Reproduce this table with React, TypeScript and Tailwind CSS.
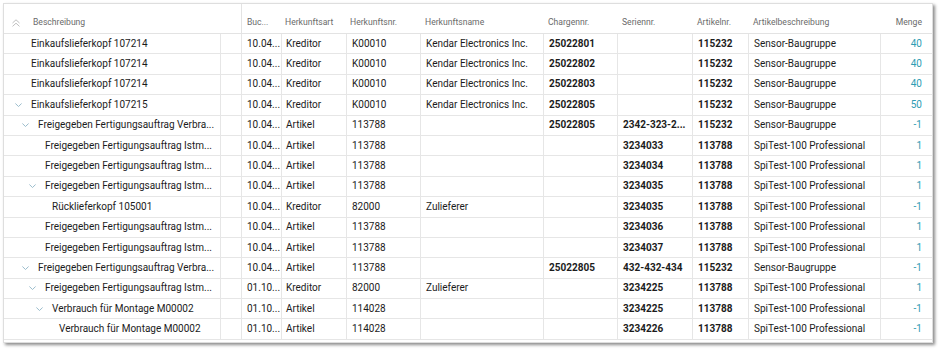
const rows = [
  { lvl: 0, open: false, desc: "Einkaufslieferkopf 107214", date: "10.04...", art: "Kreditor", nr: "K00010", name: "Kendar Electronics Inc.", charge: "25022801", serie: "", item: "115232", itemDesc: "Sensor-Baugruppe", qty: "40" },
  { lvl: 0, open: false, desc: "Einkaufslieferkopf 107214", date: "10.04...", art: "Kreditor", nr: "K00010", name: "Kendar Electronics Inc.", charge: "25022802", serie: "", item: "115232", itemDesc: "Sensor-Baugruppe", qty: "40" },
  { lvl: 0, open: false, desc: "Einkaufslieferkopf 107214", date: "10.04...", art: "Kreditor", nr: "K00010", name: "Kendar Electronics Inc.", charge: "25022803", serie: "", item: "115232", itemDesc: "Sensor-Baugruppe", qty: "40" },
  { lvl: 0, open: true, desc: "Einkaufslieferkopf 107215", date: "10.04...", art: "Kreditor", nr: "K00010", name: "Kendar Electronics Inc.", charge: "25022805", serie: "", item: "115232", itemDesc: "Sensor-Baugruppe", qty: "50" },
  { lvl: 1, open: true, desc: "Freigegeben Fertigungsauftrag Verbra...", date: "10.04...", art: "Artikel", nr: "113788", name: "", charge: "25022805", serie: "2342-323-2...", item: "115232", itemDesc: "Sensor-Baugruppe", qty: "-1" },
  { lvl: 2, open: false, desc: "Freigegeben Fertigungsauftrag Istm...", date: "10.04...", art: "Artikel", nr: "113788", name: "", charge: "", serie: "3234033", item: "113788", itemDesc: "SpiTest-100 Professional", qty: "1" },
  { lvl: 2, open: false, desc: "Freigegeben Fertigungsauftrag Istm...", date: "10.04...", art: "Artikel", nr: "113788", name: "", charge: "", serie: "3234034", item: "113788", itemDesc: "SpiTest-100 Professional", qty: "1" },
  { lvl: 2, open: true, desc: "Freigegeben Fertigungsauftrag Istm...", date: "10.04...", art: "Artikel", nr: "113788", name: "", charge: "", serie: "3234035", item: "113788", itemDesc: "SpiTest-100 Professional", qty: "1" },
  { lvl: 3, open: false, desc: "Rücklieferkopf 105001", date: "10.04...", art: "Kreditor", nr: "82000", name: "Zulieferer", charge: "", serie: "3234035", item: "113788", itemDesc: "SpiTest-100 Professional", qty: "-1" },
  { lvl: 2, open: false, desc: "Freigegeben Fertigungsauftrag Istm...", date: "10.04...", art: "Artikel", nr: "113788", name: "", charge: "", serie: "3234036", item: "113788", itemDesc: "SpiTest-100 Professional", qty: "1" },
  { lvl: 2, open: false, desc: "Freigegeben Fertigungsauftrag Istm...", date: "10.04...", art: "Artikel", nr: "113788", name: "", charge: "", serie: "3234037", item: "113788", itemDesc: "SpiTest-100 Professional", qty: "1" },
  { lvl: 1, open: true, desc: "Freigegeben Fertigungsauftrag Verbra...", date: "10.04...", art: "Artikel", nr: "113788", name: "", charge: "25022805", serie: "432-432-434", item: "115232", itemDesc: "Sensor-Baugruppe", qty: "-1" },
  { lvl: 2, open: true, desc: "Freigegeben Fertigungsauftrag Istm...", date: "01.10...", art: "Kreditor", nr: "82000", name: "Zulieferer", charge: "", serie: "3234225", item: "113788", itemDesc: "SpiTest-100 Professional", qty: "1" },
  { lvl: 3, open: true, desc: "Verbrauch für Montage M00002", date: "01.10...", art: "Artikel", nr: "114028", name: "", charge: "", serie: "3234225", item: "113788", itemDesc: "SpiTest-100 Professional", qty: "-1" },
  { lvl: 4, open: false, desc: "Verbrauch für Montage M00002", date: "01.10...", art: "Artikel", nr: "114028", name: "", charge: "", serie: "3234226", item: "113788", itemDesc: "SpiTest-100 Professional", qty: "-1" },
];

const cols = "grid grid-cols-[216px_21px_40px_65px_74px_123px_74px_75px_56px_132px_1fr]";

function Chevron() {
  return (
    <svg width="7" height="4" viewBox="0 0 7 4" className="shrink-0">
      <polyline points="0.4,0.5 3.5,3.5 6.6,0.5" fill="none" stroke="#8fb4c6" strokeWidth="0.9" />
    </svg>
  );
}

function CollapseAll() {
  return (
    <svg width="8" height="8" viewBox="0 0 8 8" className="shrink-0">
      <polyline points="0.5,4 4,0.8 7.5,4" fill="none" stroke="#b8b8b8" strokeWidth="0.9" />
      <polyline points="0.5,7.4 4,4.2 7.5,7.4" fill="none" stroke="#b8b8b8" strokeWidth="0.9" />
    </svg>
  );
}

const indents = ["pl-[11px]", "pl-[18px]", "pl-[25px]", "pl-[32px]", "pl-[39px]"];

export default function App() {
  return (
    <div className="w-[940px] h-[349px] bg-white pt-[3px] pl-[3px] font-['Roboto',sans-serif]">
      <div className="w-[930px] h-[340px] border border-[#dedede] bg-white shadow-[2px_2px_3px_rgba(0,0,0,0.45)] overflow-hidden">
        {/* header */}
        <div className={`${cols} h-[30px] border-b border-[#e3e3e3] text-[8.6px] text-[#6a6a6a]`}>
          <div className="col-span-2 flex items-center pt-[8px] pl-[8px] gap-[13px]">
            <CollapseAll />
            <span>Beschreibung</span>
          </div>
          <div className="flex items-center pt-[8px] pl-[5px] border-l border-[#e3e3e3]">Buc...</div>
          <div className="flex items-center pt-[8px] pl-[4px]">Herkunftsart</div>
          <div className="flex items-center pt-[8px] pl-[4px]">Herkunftsnr.</div>
          <div className="flex items-center pt-[8px] pl-[5px]">Herkunftsname</div>
          <div className="flex items-center pt-[8px] pl-[5px]">Chargennr.</div>
          <div className="flex items-center pt-[8px] pl-[5px]">Seriennr.</div>
          <div className="flex items-center pt-[8px] pl-[5px]">Artikelnr.</div>
          <div className="flex items-center pt-[8px] pl-[5px]">Artikelbeschreibung</div>
          <div className="flex items-center justify-end pt-[8px] pr-[10px]">Menge</div>
        </div>

        {rows.map((r, i) => (
          <div key={i} className={`${cols} h-[20.4px] border-b border-[#e6e6e6] text-[10px] text-[#1c1c1c] leading-none`}>
            <div className={`flex items-center gap-[9px] ${indents[r.lvl]} whitespace-nowrap overflow-hidden`}>
              {r.open ? <Chevron /> : <span className="w-[7px] shrink-0" />}
              <span>{r.desc}</span>
            </div>
            <div className="border-l border-[#e6e6e6]" />
            <div className="flex items-center pl-[5px] border-l border-[#e6e6e6] whitespace-nowrap overflow-hidden">{r.date}</div>
            <div className="flex items-center pl-[4px] border-l border-[#e6e6e6] whitespace-nowrap overflow-hidden">{r.art}</div>
            <div className="flex items-center pl-[5px] border-l border-[#e6e6e6] whitespace-nowrap overflow-hidden">{r.nr}</div>
            <div className="flex items-center pl-[5px] border-l border-[#e6e6e6] whitespace-nowrap overflow-hidden">{r.name}</div>
            <div className="flex items-center pl-[5px] border-l border-[#e6e6e6] font-bold whitespace-nowrap overflow-hidden">{r.charge}</div>
            <div className="flex items-center pl-[5px] border-l border-[#e6e6e6] font-bold whitespace-nowrap overflow-hidden">{r.serie}</div>
            <div className="flex items-center pl-[5px] border-l border-[#e6e6e6] font-bold whitespace-nowrap overflow-hidden">{r.item}</div>
            <div className="flex items-center pl-[5px] border-l border-[#e6e6e6] whitespace-nowrap overflow-hidden">{r.itemDesc}</div>
            <div className="flex items-center justify-end pr-[10px] border-l border-[#e6e6e6] text-[#2e9cb3]">{r.qty}</div>
          </div>
        ))}
      </div>
    </div>
  );
}
